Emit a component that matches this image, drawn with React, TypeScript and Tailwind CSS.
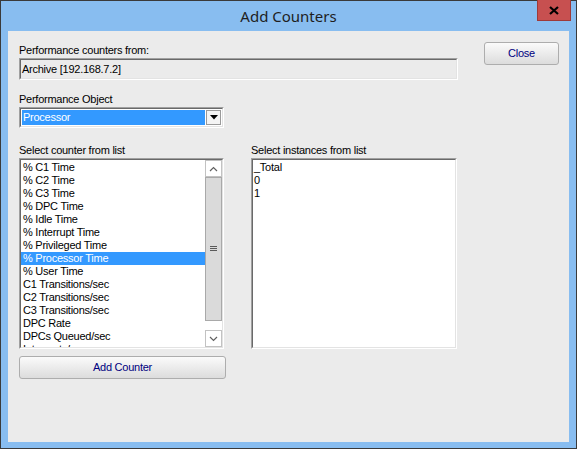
import React from "react";

const counters = [
  "% C1 Time",
  "% C2 Time",
  "% C3 Time",
  "% DPC Time",
  "% Idle Time",
  "% Interrupt Time",
  "% Privileged Time",
  "% Processor Time",
  "% User Time",
  "C1 Transitions/sec",
  "C2 Transitions/sec",
  "C3 Transitions/sec",
  "DPC Rate",
  "DPCs Queued/sec",
  "Interrupts/sec",
];

const instances = ["_Total", "0", "1"];

// classic sunken 3D frame
function Sunken({ className, children }: { className?: string; children: React.ReactNode }) {
  return (
    <div className={"border border-t-[#a0a0a0] border-l-[#a0a0a0] border-r-white border-b-white " + (className ?? "")}>
      <div className="h-full w-full border border-t-[#696969] border-l-[#696969] border-r-[#e3e3e3] border-b-[#e3e3e3]">
        {children}
      </div>
    </div>
  );
}

function PushButton({ label, className }: { label: string; className?: string }) {
  return (
    <button
      type="button"
      className={
        "flex items-center justify-center rounded-[3px] border border-[#adadad] bg-gradient-to-b from-[#fbfbfb] to-[#dcdcdc] text-[#000080] " +
        (className ?? "")
      }
    >
      {label}
    </button>
  );
}

function ScrollButton({ up }: { up?: boolean }) {
  return (
    <div className="flex h-[17px] w-[17px] items-center justify-center border border-[#c2c2c2] bg-white">
      <svg width="9" height="6" viewBox="0 0 9 6">
        <path d={up ? "M1 5 L4.5 1.5 L8 5" : "M1 1 L4.5 4.5 L8 1"} fill="none" stroke="#606060" strokeWidth="1.2" />
      </svg>
    </div>
  );
}

export default function App() {
  return (
    <div
      className="flex h-[449px] w-[577px] flex-col border border-[#3a3a3a] bg-[#88bdf0] text-[11px] leading-[13px] text-black"
      style={{ fontFamily: '"Liberation Sans", Arial, sans-serif' }}
    >
      {/* Title bar */}
      <div className="relative flex h-[30px] shrink-0 items-center justify-center">
        <span className="text-[15px] text-[#1e1e1e]" style={{ fontFamily: '"Noto Sans", "Open Sans", sans-serif' }}>
          Add Counters
        </span>
        <div className="absolute right-[5px] top-[-1px] flex h-[21px] w-[34px] items-center justify-center border border-t-0 border-[#9e3a3a] bg-[#c75050]">
          <svg width="10" height="9" viewBox="0 0 10 9">
            <path d="M1 1 L9 8 M9 1 L1 8" stroke="#000" strokeWidth="2.2" />
          </svg>
        </div>
      </div>

      {/* Client area */}
      <div className="mx-[7px] mb-[6px] flex flex-1 bg-[#ebebeb] pl-[11px] pr-[10px] pt-[11px] tracking-[-0.25px]">
        <div className="flex w-[440px] flex-col">
          <div className="mt-[2px] h-[13px]">Performance counters from:</div>
          <Sunken className="mt-[1px] h-[22px] w-[439px]">
            <div className="pl-[1px] pt-[3px]">Archive [192.168.7.2]</div>
          </Sunken>

          <div className="mt-[13px] h-[13px]">Performance Object</div>
          <Sunken className="mt-[1px] h-[21px] w-[205px]">
            <div className="flex h-full bg-white p-px">
              <div className="flex flex-1 items-center bg-[#3399ff] pl-px text-white">Processor</div>
              <div className="ml-px flex w-[15px] items-center justify-center border border-[#9a9a9a] bg-[#f4f4f4]">
                <svg width="8" height="5" viewBox="0 0 8 5">
                  <path d="M0 0 H8 L4 4.5 Z" fill="#000" />
                </svg>
              </div>
            </div>
          </Sunken>

          <div className="mt-[16px] flex gap-[25px]">
            {/* counter list */}
            <div className="flex flex-col">
              <div className="h-[13px]">Select counter from list</div>
              <Sunken className="mt-px h-[191px] w-[205px]">
                <div className="flex h-full bg-white">
                  <div className="flex-1 overflow-hidden pt-[1px]">
                    {counters.map((c) => (
                      <div
                        key={c}
                        className={
                          "h-[13px] whitespace-nowrap pl-[2px] " +
                          (c === "% Processor Time" ? "bg-[#3399ff] text-white" : "")
                        }
                      >
                        {c}
                      </div>
                    ))}
                  </div>
                  <div className="flex w-[17px] flex-col">
                    <ScrollButton up />
                    <div className="flex h-[144px] items-center justify-center border border-[#a9a9a9] bg-[#dadada]">
                      <svg width="7" height="6" viewBox="0 0 7 6">
                        <path d="M0 0.5 H7 M0 2.5 H7 M0 4.5 H7" stroke="#5a5a5a" strokeWidth="1" />
                      </svg>
                    </div>
                    <div className="flex-1 bg-white" />
                    <ScrollButton />
                  </div>
                </div>
              </Sunken>
              <PushButton label="Add Counter" className="mt-[7px] h-[23px] w-[207px]" />
            </div>

            {/* instance list */}
            <div className="flex flex-col">
              <div className="h-[13px]">Select instances from list</div>
              <Sunken className="mt-px h-[191px] w-[206px]">
                <div className="h-full bg-white pl-[1px] pt-[1px]">
                  {instances.map((i) => (
                    <div key={i} className="h-[13px]">
                      {i}
                    </div>
                  ))}
                </div>
              </Sunken>
            </div>
          </div>
        </div>

        <div className="ml-auto">
          <PushButton label="Close" className="h-[23px] w-[75px]" />
        </div>
      </div>
    </div>
  );
}
